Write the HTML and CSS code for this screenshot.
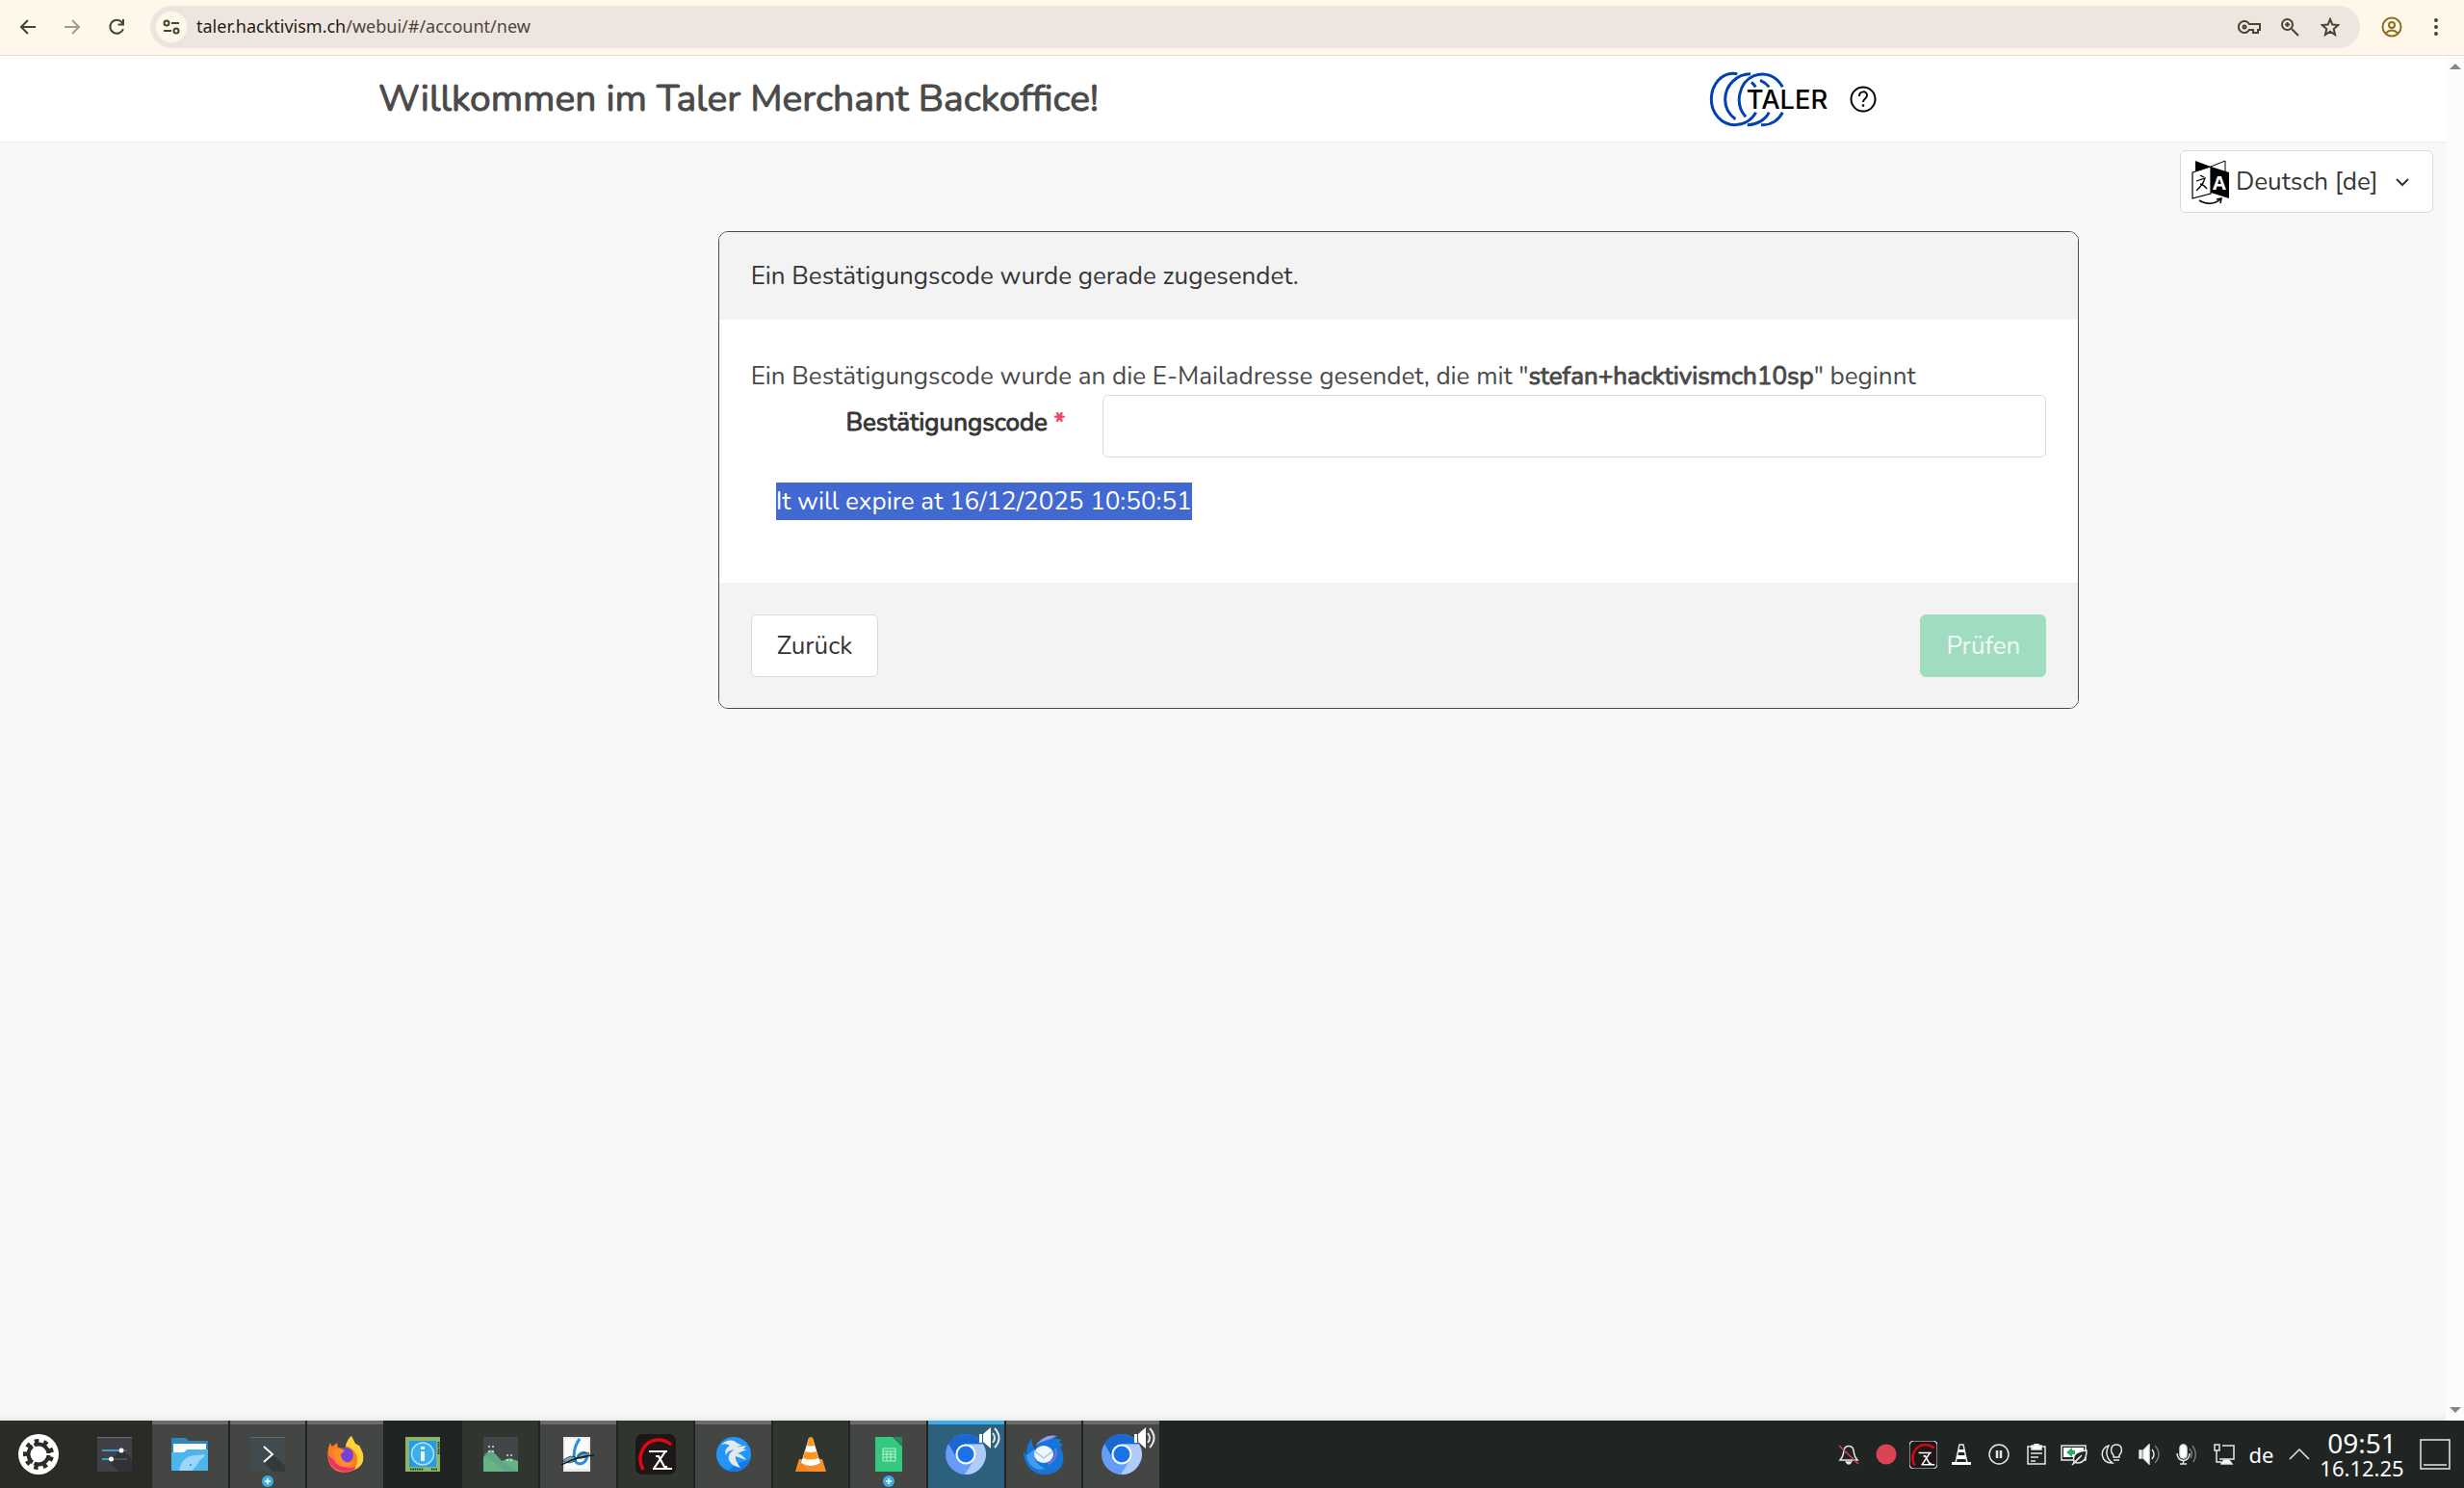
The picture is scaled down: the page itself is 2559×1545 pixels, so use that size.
FILE: index.html
```html
<!DOCTYPE html>
<html lang="de">
<head>
  <meta charset="UTF-8" />
  <meta name="viewport" content="width=device-width, initial-scale=1.0" />
  <title>Taler Merchant Backoffice</title>
  <link rel="stylesheet" href="styles.css">
</head>
<body>
  <!-- shared icons -->
  <svg class="sprite" aria-hidden="true">
    <symbol id="chromium" viewBox="0 0 42 42">
      <circle cx="21" cy="21" r="21" fill="#669df6"/>
      <path d="M3 10A21 21 0 0 1 39 10.500H21A10.500 10.500 0 0 0 11 24Z" fill="#1967d2"/>
      <path d="M39 10.500A21 21 0 0 1 20 42L30 26A10.500 10.500 0 0 0 21 10.500Z" fill="#aecbfa"/>
      <circle cx="21" cy="21" r="10.500" fill="#fff"/>
      <circle cx="21" cy="21" r="8.500" fill="#1a73e8"/>
    </symbol>
    <symbol id="loud" viewBox="0 0 24 24">
      <path d="M1 8h3v9H1zM5 8l8-7v22l-8-7z" fill="#fff"/>
      <path d="M15 7q4 5 0 10M17 2q9 10 0 20" fill="none" stroke="#e6e6e6" stroke-width="2"/>
    </symbol>
    <symbol id="gauge" viewBox="0 0 42 42">
      <rect width="42" height="42" rx="7" fill="#1d1718"/>
      <path d="M8 37C0 23 9 6 24 6q7 0 13 5" fill="none" stroke="#e30613" stroke-width="3.500"/>
      <path d="M14 18h19M18 36h20M31 18L19 36M21 23h3l6 11h3" fill="none" stroke="#fff" stroke-width="2.200"/>
    </symbol>
    <symbol id="plus" viewBox="0 0 12 12">
      <circle cx="6" cy="6" r="6" fill="#3daee9"/>
      <path d="M6 3v6M3 6h6" stroke="#fff" stroke-width="1.500"/>
    </symbol>
  </svg>

  <div class="toolbar">
    <button class="tool" aria-label="Zurück">
      <svg width="18" height="18" viewBox="0 0 18 18"><path d="M17 9H2M9 2L2 9l7 7"/></svg>
    </button>
    <button class="tool" aria-label="Vorwärts" disabled>
      <svg width="18" height="18" viewBox="0 0 18 18"><path d="M1 9h15M9 2l7 7-7 7"/></svg>
    </button>
    <button class="tool" aria-label="Neu laden">
      <svg width="18" height="18" viewBox="0 0 18 18"><path d="M16 11a7 7 0 1 1-1.500-7L16 6M16 1v5.500h-5.500"/></svg>
    </button>
    <div class="omnibox">
      <button class="site-info" aria-label="Website-Informationen">
        <svg width="18" height="18" viewBox="0 0 18 18"><circle cx="4" cy="5" r="2.500"/><path d="M9 5h8M1 13h8"/><circle cx="14" cy="13" r="2.500"/></svg>
      </button>
      <div class="url"><b>taler.hacktivism.ch</b>/webui/#/account/new</div>
      <button class="tool" aria-label="Passwörter">
        <svg width="24" height="18" viewBox="0 0 24 18"><path d="M12 6A6 6 0 1 0 12 12h4v3h5v-3h2V6z"/><circle cx="7" cy="9" r="1.500"/></svg>
      </button>
      <button class="tool" aria-label="Zoom">
        <svg width="20" height="20" viewBox="0 0 20 20"><circle cx="7.500" cy="7.500" r="5.500"/><path d="M12 12l7 7M7.500 5v5M5 7.500h5"/></svg>
      </button>
      <button class="tool" aria-label="Lesezeichen">
        <svg width="20" height="20" viewBox="0 0 20 20"><path d="M10 2l2.300 5.600 6 .5-4.600 4 1.400 5.900-5.100-3.200-5.100 3.200 1.400-5.900-4.600-4 6-.5z"/></svg>
      </button>
    </div>
    <button class="tool profile" aria-label="Profil">
      <svg width="22" height="22" viewBox="0 0 22 22"><circle cx="11" cy="11" r="9.500"/><circle cx="11" cy="9" r="3"/><path d="M4.500 17.500q6.500-6 13 0"/></svg>
    </button>
    <button class="tool" aria-label="Menü">
      <svg width="6" height="20" viewBox="0 0 6 20"><g fill="#4a4330" stroke="none"><circle cx="3" cy="3" r="2"/><circle cx="3" cy="10" r="2"/><circle cx="3" cy="17" r="2"/></g></svg>
    </button>
  </div>

  <div class="viewport">
    <div class="page">
      <header class="navbar">
        <h1>Willkommen im Taler Merchant Backoffice!</h1>
        <div class="brand">
          <a href="#" aria-label="Taler">
            <svg width="126" height="58" viewBox="44 39 378 174">
              <g fill="none" stroke="#0042b3" stroke-width="9">
                <path d="M132 47C82 38 51 82 51 127c0 44 33 79 73 79 29 0 53-16 66-39M176 73q8 7 13 15"/>
                <path d="M173 47c-42 0-79 35-79 80 0 24 12 47 32 61M163 206c27 1 54-14 68-39M203 67q18 8 28 21"/>
                <path d="M273 88C253 52 217 40 184 53c-46 19-63 87-26 128M206 206c28 2 53-13 67-39"/>
              </g>
              <text x="160" y="156" class="brand-text">TALER</text>
            </svg>
          </a>
          <a href="#" aria-label="Hilfe">
            <svg width="28" height="28" viewBox="0 0 28 28"><g fill="none" stroke="#000" stroke-width="2"><circle cx="14" cy="14" r="12.500"/><path d="M10 11c0-6 8-6 8-1 0 4-4 3-4 7"/></g><circle cx="14" cy="20.500" r="1.300"/></svg>
          </a>
        </div>
      </header>

      <div class="lang-row">
        <div class="lang">
          <label for="lang" aria-label="Sprache">
            <svg width="40" height="46" viewBox="0 0 40 46">
              <path d="M4 1l16 6-16 5z"/>
              <path d="M20 7l15-6v12" fill="none" stroke="#000"/>
              <path d="M1 13l19-6v28L1 40z" fill="#fff" stroke="#000" stroke-width="1.200"/>
              <path d="M20 7l19 6v27l-19-6z"/>
              <path d="M9 16l4 2M5 22l9-3q-2 7-9 13M9 25q4 1 7 5" fill="none" stroke="#000" stroke-width="1.300"/>
              <text x="22" y="31" class="lang-letter">A</text>
              <path d="M8 42q12 7 22-1M26 41l5-1-1 5" fill="none" stroke="#000" stroke-width="1.500"/>
            </svg>
          </label>
          <select id="lang">
            <option>Deutsch [de]</option>
            <option>English [en]</option>
          </select>
          <svg class="chevron" width="14" height="10" viewBox="0 0 14 10"><path d="M1 2l6 6 6-6"/></svg>
        </div>
      </div>

      <main>
        <form class="card">
          <div class="card-head">Ein Bestätigungscode wurde gerade zugesendet.</div>
          <div class="card-body">
            <p>Ein Bestätigungscode wurde an die E-Mailadresse gesendet, die mit "<b>stefan+hacktivismch10sp</b>" beginnt</p>
            <div class="field">
              <label for="code">Bestätigungscode <span class="required">*</span></label>
              <input type="text" id="code">
            </div>
            <p class="expire"><mark>It will expire at 16/12/2025 10:50:51</mark></p>
          </div>
          <div class="card-foot">
            <button type="button" class="btn">Zurück</button>
            <button type="submit" class="btn btn-success" disabled>Prüfen</button>
          </div>
        </form>
      </main>
    </div>
    <div class="scrollbar">
      <svg width="12" height="6" viewBox="0 0 12 6"><path d="M0 6l6-6 6 6z"/></svg>
      <svg width="12" height="6" viewBox="0 0 12 6"><path d="M0 0h12L6 6z"/></svg>
    </div>
  </div>

  <footer class="taskbar">
    <button class="launcher" aria-label="Startmenü">
      <svg width="42" height="42" viewBox="0 0 42 42">
        <circle cx="21" cy="21" r="21" fill="#fff"/>
        <g fill="none" stroke="#2a2c27">
          <circle cx="21" cy="21" r="10.500" stroke-width="4"/>
          <circle cx="21" cy="21" r="14" stroke-width="4" stroke-dasharray="4.500 5.273" transform="rotate(11 21 21)"/>
        </g>
        <path d="M28 21h11M18 16l-6-10M18 26l-6 10" stroke="#fff" stroke-width="2"/>
      </svg>
    </button>
    <button class="launcher" aria-label="Systemeinstellungen">
      <svg width="36" height="36" viewBox="0 0 36 36">
        <rect width="36" height="36" fill="#3f4146"/><path d="M0 0h36v1H0z" fill="#6b6d70"/><path d="M12 25l13-12 11 10v13H22z" fill="#303237"/>
        <path d="M5 14h26M5 23h26" stroke="#666a70"/><path d="M5 14h19M5 23h9" stroke="#3daee9" stroke-width="1.500"/>
        <circle cx="25" cy="14" r="2.500" fill="#fff"/><circle cx="14.500" cy="23" r="2.500" fill="#fff"/>
      </svg>
    </button>

    <div class="tasks">
      <button class="task open" aria-label="Dolphin">
        <svg width="40" height="36" viewBox="0 0 40 36">
          <path d="M1 1h15l3 3h20v15H1z" fill="#2e86c1"/><path d="M3 7h34v12H3z" fill="#fcfcfc"/>
          <path d="M1 16h13l3-3h22v22H1z" fill="#4db4ec"/><path d="M9 35c2-12 10-17 20-16l7-1c-1 5-6 5-7 9-2 4-5 5-6 8z" fill="#9bd5f7"/><circle cx="21" cy="29" r="1" fill="#2e86c1"/>
        </svg>
      </button>
      <button class="task open" aria-label="Konsole">
        <svg width="36" height="36" viewBox="0 0 36 36"><rect width="36" height="36" fill="#414b4e"/><path d="M14 26l9-8 13 12v6H23z" fill="#33393d"/><path d="M0 0h36v1H0z" fill="#5f686b"/><path d="M14 10l9 8-9 8" fill="none" stroke="#fcfcfc" stroke-width="2"/></svg>
        <svg class="badge" width="12" height="12"><use href="#plus"/></svg>
      </button>
      <button class="task open" aria-label="Firefox">
        <svg width="38" height="38" viewBox="0 0 38 38">
          <path d="M3 7l2 4 5-4 1 5 7 1 4-10 3-3 4 8 4 2 4 8c4 20-31 29-36 7Q-1 15 3 7z" fill="#ff7a22"/>
          <path d="M1 20c0 18 23 22 33 9-7 6-16 5-23 0z" fill="#f02d70"/><path d="M19 10q2-7 6-10l4 8 4 2c8 13 4 22-5 25 5-8 4-17-3-22z" fill="#ffd43b"/>
          <circle cx="19" cy="20" r="8" fill="#7542d9"/><path d="M5 15c4-3 10-2 13 0l-4 4c0 8 9 11 15 7-7 10-22 7-22-4z" fill="#ff8b2c"/>
        </svg>
      </button>
      <button class="task" aria-label="Info-Zentrum">
        <svg width="36" height="36" viewBox="0 0 36 36"><rect width="36" height="36" fill="#8db66b"/><path d="M5 33.500h14M27 33.500h6M34.500 5v13" stroke="#243622" stroke-width="2" stroke-dasharray="1.500 .8"/><rect x="4" y="4" width="28" height="27" fill="#239bea"/><circle cx="18" cy="17.500" r="11.500" fill="#3daee9" stroke="#b6e2fb" stroke-width="1.500"/><path d="M18 10v3M18 15v10" stroke="#e5f5ff" stroke-width="4"/></svg>
      </button>
      <button class="task idle" aria-label="Systemmonitor">
        <svg width="36" height="36" viewBox="0 0 36 36"><rect width="36" height="36" fill="#424649"/><path d="M0 21l8-8 11 12 8-3 9 3v11H0z" fill="#67b483"/><path d="M8 13l11 12 17 11H23L0 18z" fill="#5c9f8a" opacity=".6"/><path d="M5 10h6M5 15h6M24 19h7M24 24h7" stroke="#dbe9e0" stroke-width="1.500" stroke-dasharray="2 2"/></svg>
      </button>
      <button class="task open" aria-label="Okular">
        <svg width="36" height="36" viewBox="0 0 36 36"><path d="M3 0h28v36H3z" fill="#e9ebec"/><path d="M5 2h24v31H5z" fill="#fafafa"/><path d="M20 2c-6 8-8 20-3 25 6 3 12-3 10-9-3-4-9 0-9 4" fill="none" stroke="#2a8dde" stroke-width="3"/><path d="M2 25q9-8 15-3 6-8 13-5-2 6-12 5Q11 30 2 25z" fill="#5793a8" opacity=".8" stroke="#1b272c"/><path d="M1 29q16-9 34-10" fill="none" stroke="#15191b" stroke-width="1.500"/></svg>
      </button>
      <button class="task idle" aria-label="Monitor"><svg width="42" height="42"><use href="#gauge"/></svg></button>
      <button class="task open" aria-label="Falkon">
        <svg width="36" height="36" viewBox="0 0 36 36"><circle cx="18" cy="18" r="18" fill="#2196f8"/><path d="M19 29l16-6C31 34 20 38 12 35z" fill="#1677e8"/><path d="M5 8c5-5 12-6 16-2l6 3-6 1c4 1 7-1 10-1l-3 4h4l-10 4c4 1 7 4 9 7l-11-4c-1 4 2 7 5 12-8-1-14-7-12-13 1-3 4-5 6-6-6 1-8 3-9 6-2-4 0-8 4-10-3-2-6-2-9-1z" fill="#e5e9ec"/></svg>
      </button>
      <button class="task idle" aria-label="VLC">
        <svg width="34" height="36" viewBox="0 0 34 36"><path d="M5 23h24l4 13H1z" fill="#f5902a"/><path d="M15 1h4l8 26q-10 6-20 0z" fill="#fff"/><path d="M15 1q2-2 4 0l2 8q-4 1-8 0zM11 15q6 2 12 0l2 7q-8 3-16 0z" fill="#ff971f"/><path d="M7 27l8 9H1z" fill="#e87914" opacity=".5"/></svg>
      </button>
      <button class="task open" aria-label="LibreOffice Calc">
        <svg width="28" height="36" viewBox="0 0 28 36"><path d="M0 0h18l10 10v26H0z" fill="#35c980"/><path d="M19 0h9v9z" fill="#248b5d"/><path d="M8 12h13v13H8zM8 15h13M8 18h13M8 21h13M12 15v10M16 15v10" fill="none" stroke="#bff0d5"/></svg>
        <svg class="badge" width="12" height="12"><use href="#plus"/></svg>
      </button>
      <button class="task active" aria-label="Chromium">
        <svg width="42" height="42"><use href="#chromium"/></svg>
        <svg class="sound" width="24" height="24"><use href="#loud"/></svg>
      </button>
      <button class="task open" aria-label="Thunderbird">
        <svg width="42" height="42" viewBox="0 0 42 42"><path d="M13 11C21 0 31 1 36 2l-4 2 8 2-3 2 4 4-3 1c9 17-1 29-16 29C8 42 0 30 0 18l3 4C3 13 5 8 9 5c-1 5 1 9 4 12z" fill="#1676d8"/><path d="M13 11C20 3 28 0 34 2l-6 3-9 3z" fill="#a694ed"/><path d="M3 22c4-1 5-6 10-6-4 9 0 15 9 20-9 3-18-4-19-14z" fill="#3f9cf2"/><ellipse cx="21" cy="21" rx="10" ry="9" fill="#edf5ff"/><path d="M12 18l9 7 9-7" fill="none" stroke="#a9c6e6" stroke-width="1.500"/><path d="M33 15c2 8-2 14-8 16" fill="none" stroke="#7b74e2" stroke-width="2"/></svg>
      </button>
      <button class="task open" aria-label="Chromium">
        <svg width="42" height="42"><use href="#chromium"/></svg>
        <svg class="sound" width="24" height="24"><use href="#loud"/></svg>
      </button>
    </div>

    <div class="tray">
      <button class="tray-item" aria-label="Benachrichtigungen"><svg width="22" height="22" viewBox="0 0 22 22"><path d="M2 17c4-4 3-6 4-10 1-6 9-6 10 0 1 4 0 6 4 10z"/><path d="M8.500 19h5q-2.500 4-5 0z" fill="#fff"/><path d="M1 2l20 19" stroke="#da4453"/></svg></button>
      <button class="tray-item" aria-label="Aufnahme"><svg width="22" height="22" viewBox="0 0 22 22"><circle cx="11" cy="11" r="10.500" fill="#da4453" stroke="none"/></svg></button>
      <button class="tray-item" aria-label="Monitor"><svg width="29" height="29" stroke="none"><use href="#gauge"/></svg></button>
      <button class="tray-item" aria-label="VLC"><svg width="22" height="22" viewBox="0 0 22 22"><path d="M9 1h4l4 19H5z"/><path d="M8.500 6h5l1 3h-7zM7 12h8l1 4H6zM1 19h20v3H1z" fill="#fff" stroke="none"/></svg></button>
      <button class="tray-item" aria-label="Medien"><svg width="22" height="22" viewBox="0 0 22 22"><circle cx="11" cy="11" r="10"/><path d="M9 7v8M13 7v8" stroke-width="2.500"/></svg></button>
      <button class="tray-item" aria-label="Zwischenablage"><svg width="22" height="22" viewBox="0 0 22 22"><path d="M2 3h18v18H2zM5 10h12M5 14h8M5 18h5"/><path d="M6 2h3V0h4v2h3v4H6z" fill="#fff"/></svg></button>
      <button class="tray-item" aria-label="Energie"><svg width="28" height="24" viewBox="0 0 28 24"><path d="M1 3h25v15H1z"/><path d="M3 5h21v10H3z" fill="#fff" stroke="none"/><path d="M6 10l6-5v3h3v4h-3v3z" fill="#27ae60" stroke="none"/><path d="M12 23l8-8M14 20c-2-7 2-11 13-12 0 10-5 15-13 12z" fill="#222624"/><path d="M13 22l9-9"/></svg></button>
      <button class="tray-item" aria-label="Nachtfarben"><svg width="22" height="22" viewBox="0 0 22 22"><path d="M8 2C-2 4-1 21 12 20 6 16 4 9 8 2zM13 12c-4-4-3-11 3-11s7 7 3 11v2h-6zM13 17h6"/></svg></button>
      <button class="tray-item" aria-label="Lautstärke"><svg width="22" height="22" viewBox="0 0 22 22"><path d="M1 7h2v8H1zM5 7l6-6v20l-6-6z" fill="#fff"/><path d="M14 6q4 5 0 10"/><path d="M17 2q8 9 0 18" stroke="#777b79"/></svg></button>
      <button class="tray-item" aria-label="Mikrofon"><svg width="22" height="22" viewBox="0 0 22 22"><rect x="4" y="1" width="7" height="14" rx="3.500" fill="#fff"/><path d="M1 10c0 10 13 10 13 0M7.500 18v3M4 21h7"/><path d="M14 5q4 5 1 10M17 2q6 8 1 17" stroke="#777b79"/></svg></button>
      <button class="tray-item" aria-label="Netzwerk"><svg width="22" height="22" viewBox="0 0 22 22"><path d="M9 2h12v14H6M1 1h5v6H1zM3 7v12h5"/><path d="M8 20l3-3h5l3 4H8z" fill="#fff"/></svg></button>
      <button class="tray-item layout">de</button>
      <button class="tray-item" aria-label="Mehr"><svg width="22" height="12" viewBox="0 0 22 12"><path d="M1 11L11 1l10 10"/></svg></button>
    </div>
    <div class="clock">
      <span class="time">09:51</span>
      <span class="date">16.12.25</span>
    </div>
    <button class="desktop" aria-label="Arbeitsfläche anzeigen">
      <svg width="32" height="32" viewBox="0 0 32 32"><path d="M1 1h30v30H1zM4 27h24"/></svg>
    </button>
  </footer>
</body>
</html>
```
FILE: styles.css
```css
* {
  box-sizing: border-box;
}

body {
  margin: 0;
  height: 100vh;
  display: flex;
  flex-direction: column;
  font-family: 'Nunito', 'Lato', sans-serif;
  font-size: 26px;
  line-height: 39px;
  color: #4a4a4a;
  background-color: #f8f8f8;
}

button {
  display: flex;
  align-items: center;
  justify-content: center;
  padding: 0;
  border: none;
  background: none;
  font: inherit;
}

svg {
  display: block;
  flex: none;
}

p, h1 {
  margin: 0;
}

/* bold text keeps the regular widths, only the strokes get thicker */
h1, .card b, .field label {
  font-weight: 400;
  -webkit-text-stroke: 1px currentColor;
}

.sprite {
  position: absolute;
  width: 0;
  height: 0;
}

/* browser toolbar */
.toolbar {
  display: flex;
  align-items: center;
  height: 58px;
  padding: 0 4px 2px 8px;
  background-color: #fff8ea;
  border-bottom: 1px solid #e7dece;
}

.tool {
  width: 42px;
  height: 42px;
  margin-right: 4px;
}

.tool svg, .site-info svg {
  fill: none;
  stroke: #4a4330;
  stroke-width: 2;
}

.tool:disabled {
  opacity: 0.5;
}

.omnibox {
  flex: 1;
  display: flex;
  align-items: center;
  height: 44px;
  margin: 0 12px 0 10px;
  padding: 0 8px 0 6px;
  border-radius: 22px;
  background-color: #eee5e0;
}

.omnibox .tool {
  width: 38px;
}

.site-info {
  width: 32px;
  height: 32px;
  border-radius: 50%;
  background-color: #fff8ea;
}

.url {
  flex: 1;
  margin-left: 10px;
  font-family: 'Noto Sans', sans-serif;
  font-size: 18px;
  color: #4d4639;
}

.url b {
  font-weight: normal;
  color: #1e1b13;
}

.profile svg {
  stroke: #8a7020;
}

/* page */
.viewport {
  flex: 1;
  min-height: 0;
  display: flex;
}

.page {
  flex: 1;
  box-shadow: inset 0 -8px 6px -6px #e4e4e4;
}

.navbar {
  display: flex;
  align-items: center;
  justify-content: space-between;
  height: 90px;
  padding: 0 23% 0 393px;
  background-color: #fff;
  border-bottom: 1px solid #ececec;
}

.navbar h1 {
  font-size: 39px;
}

.brand {
  display: flex;
  align-items: center;
  gap: 20px;
  margin-right: 7px;
}

.brand-text {
  font-family: 'Inter', sans-serif;
  font-size: 82px;
  font-weight: 500;
}

.lang-row {
  display: flex;
  justify-content: flex-end;
  padding: 8px 13px 0;
}

.lang {
  display: flex;
  align-items: center;
  height: 65px;
  padding: 0 24px 0 11px;
  border: 1px solid #dbdbdb;
  border-radius: 6px;
  background-color: #fff;
}

.lang select {
  width: 172px;
  padding: 0 0 0 6px;
  border: none;
  appearance: none;
  background: none;
  font: inherit;
  color: #363636;
}

.lang-letter {
  font-family: 'Open Sans', sans-serif;
  font-size: 20px;
  font-weight: 700;
  fill: #fff;
}

.chevron path {
  fill: none;
  stroke: #363636;
  stroke-width: 2;
}

main {
  display: flex;
  justify-content: center;
  margin-left: 365px;
  padding-top: 19px;
}

.card {
  width: 65%;
  border: 1px solid #4a4a4a;
  border-radius: 10px;
  overflow: hidden;
  background-color: #fff;
}

.card-head {
  padding: 26px 33px;
  background-color: #f3f3f3;
  color: #363636;
}

.card-body {
  padding: 39px 33px 65px;
}

.field {
  display: grid;
  grid-template-columns: 1fr 3fr;
  gap: 39px;
}

.field label {
  padding-top: 9px;
  text-align: right;
  color: #363636;
}

.required {
  color: #f14668;
}

.field input {
  width: 100%;
  height: 65px;
  padding: 0 16px;
  border: 1px solid #dbdbdb;
  border-radius: 6px;
  font: inherit;
}

.expire {
  margin: 26px 26px 0;
}

mark {
  display: inline-block;
  background-color: #4169d1;
  color: #fff;
}

.card-foot {
  display: flex;
  justify-content: space-between;
  padding: 33px 33px 32px;
  background-color: #f3f3f3;
}

.btn {
  height: 65px;
  padding: 0 26px;
  border: 1px solid #dbdbdb;
  border-radius: 6px;
  background-color: #fff;
  color: #363636;
}

.btn-success {
  border-color: #a0dcc0;
  background-color: #a0dcc0;
  color: #f3fbf7;
}

.scrollbar {
  display: flex;
  flex-direction: column;
  align-items: center;
  justify-content: space-between;
  width: 19px;
  padding: 8px 0;
  background-color: #fcfcfc;
}

.scrollbar path {
  fill: #858585;
}

/* desktop panel */
.taskbar {
  display: flex;
  align-items: center;
  height: 70px;
  padding-right: 14px;
  background-color: #202422;
  font-family: 'Noto Sans', sans-serif;
  color: #fcfcfc;
}

.launcher {
  width: 79px;
  height: 70px;
  background-color: #292b26;
}

.tasks {
  display: flex;
  gap: 2px;
  width: 1046px;
  height: 70px;
}

.task {
  position: relative;
  flex: 1;
  border-top: 4px solid transparent;
  border-bottom: 4px solid transparent;
}

.idle {
  background-color: #313530;
  border-color: #313530;
}

.open {
  background-color: #434642;
  border-color: #696c69 #434642 #434642;
}

.active {
  background-color: #2d607d;
  border-color: #3daee9 #2d607d #2d607d;
}

.badge {
  position: absolute;
  left: 50%;
  bottom: -3px;
  margin-left: -6px;
}

.sound {
  position: absolute;
  top: 2px;
  right: 3px;
}

.tray {
  display: flex;
  align-items: center;
  margin-left: auto;
}

.tray-item {
  width: 39px;
  height: 39px;
  color: inherit;
}

.tray-item svg, .desktop svg {
  fill: none;
  stroke: #e6e8e7;
  stroke-width: 1.5;
}

.layout {
  font-size: 22px;
}

.clock {
  width: 92px;
  text-align: center;
}

.time, .date {
  display: block;
}

.time {
  font-size: 28px;
  line-height: 28px;
}

.date {
  font-size: 22px;
  line-height: 24px;
}

.desktop {
  margin-left: 14px;
}
```
